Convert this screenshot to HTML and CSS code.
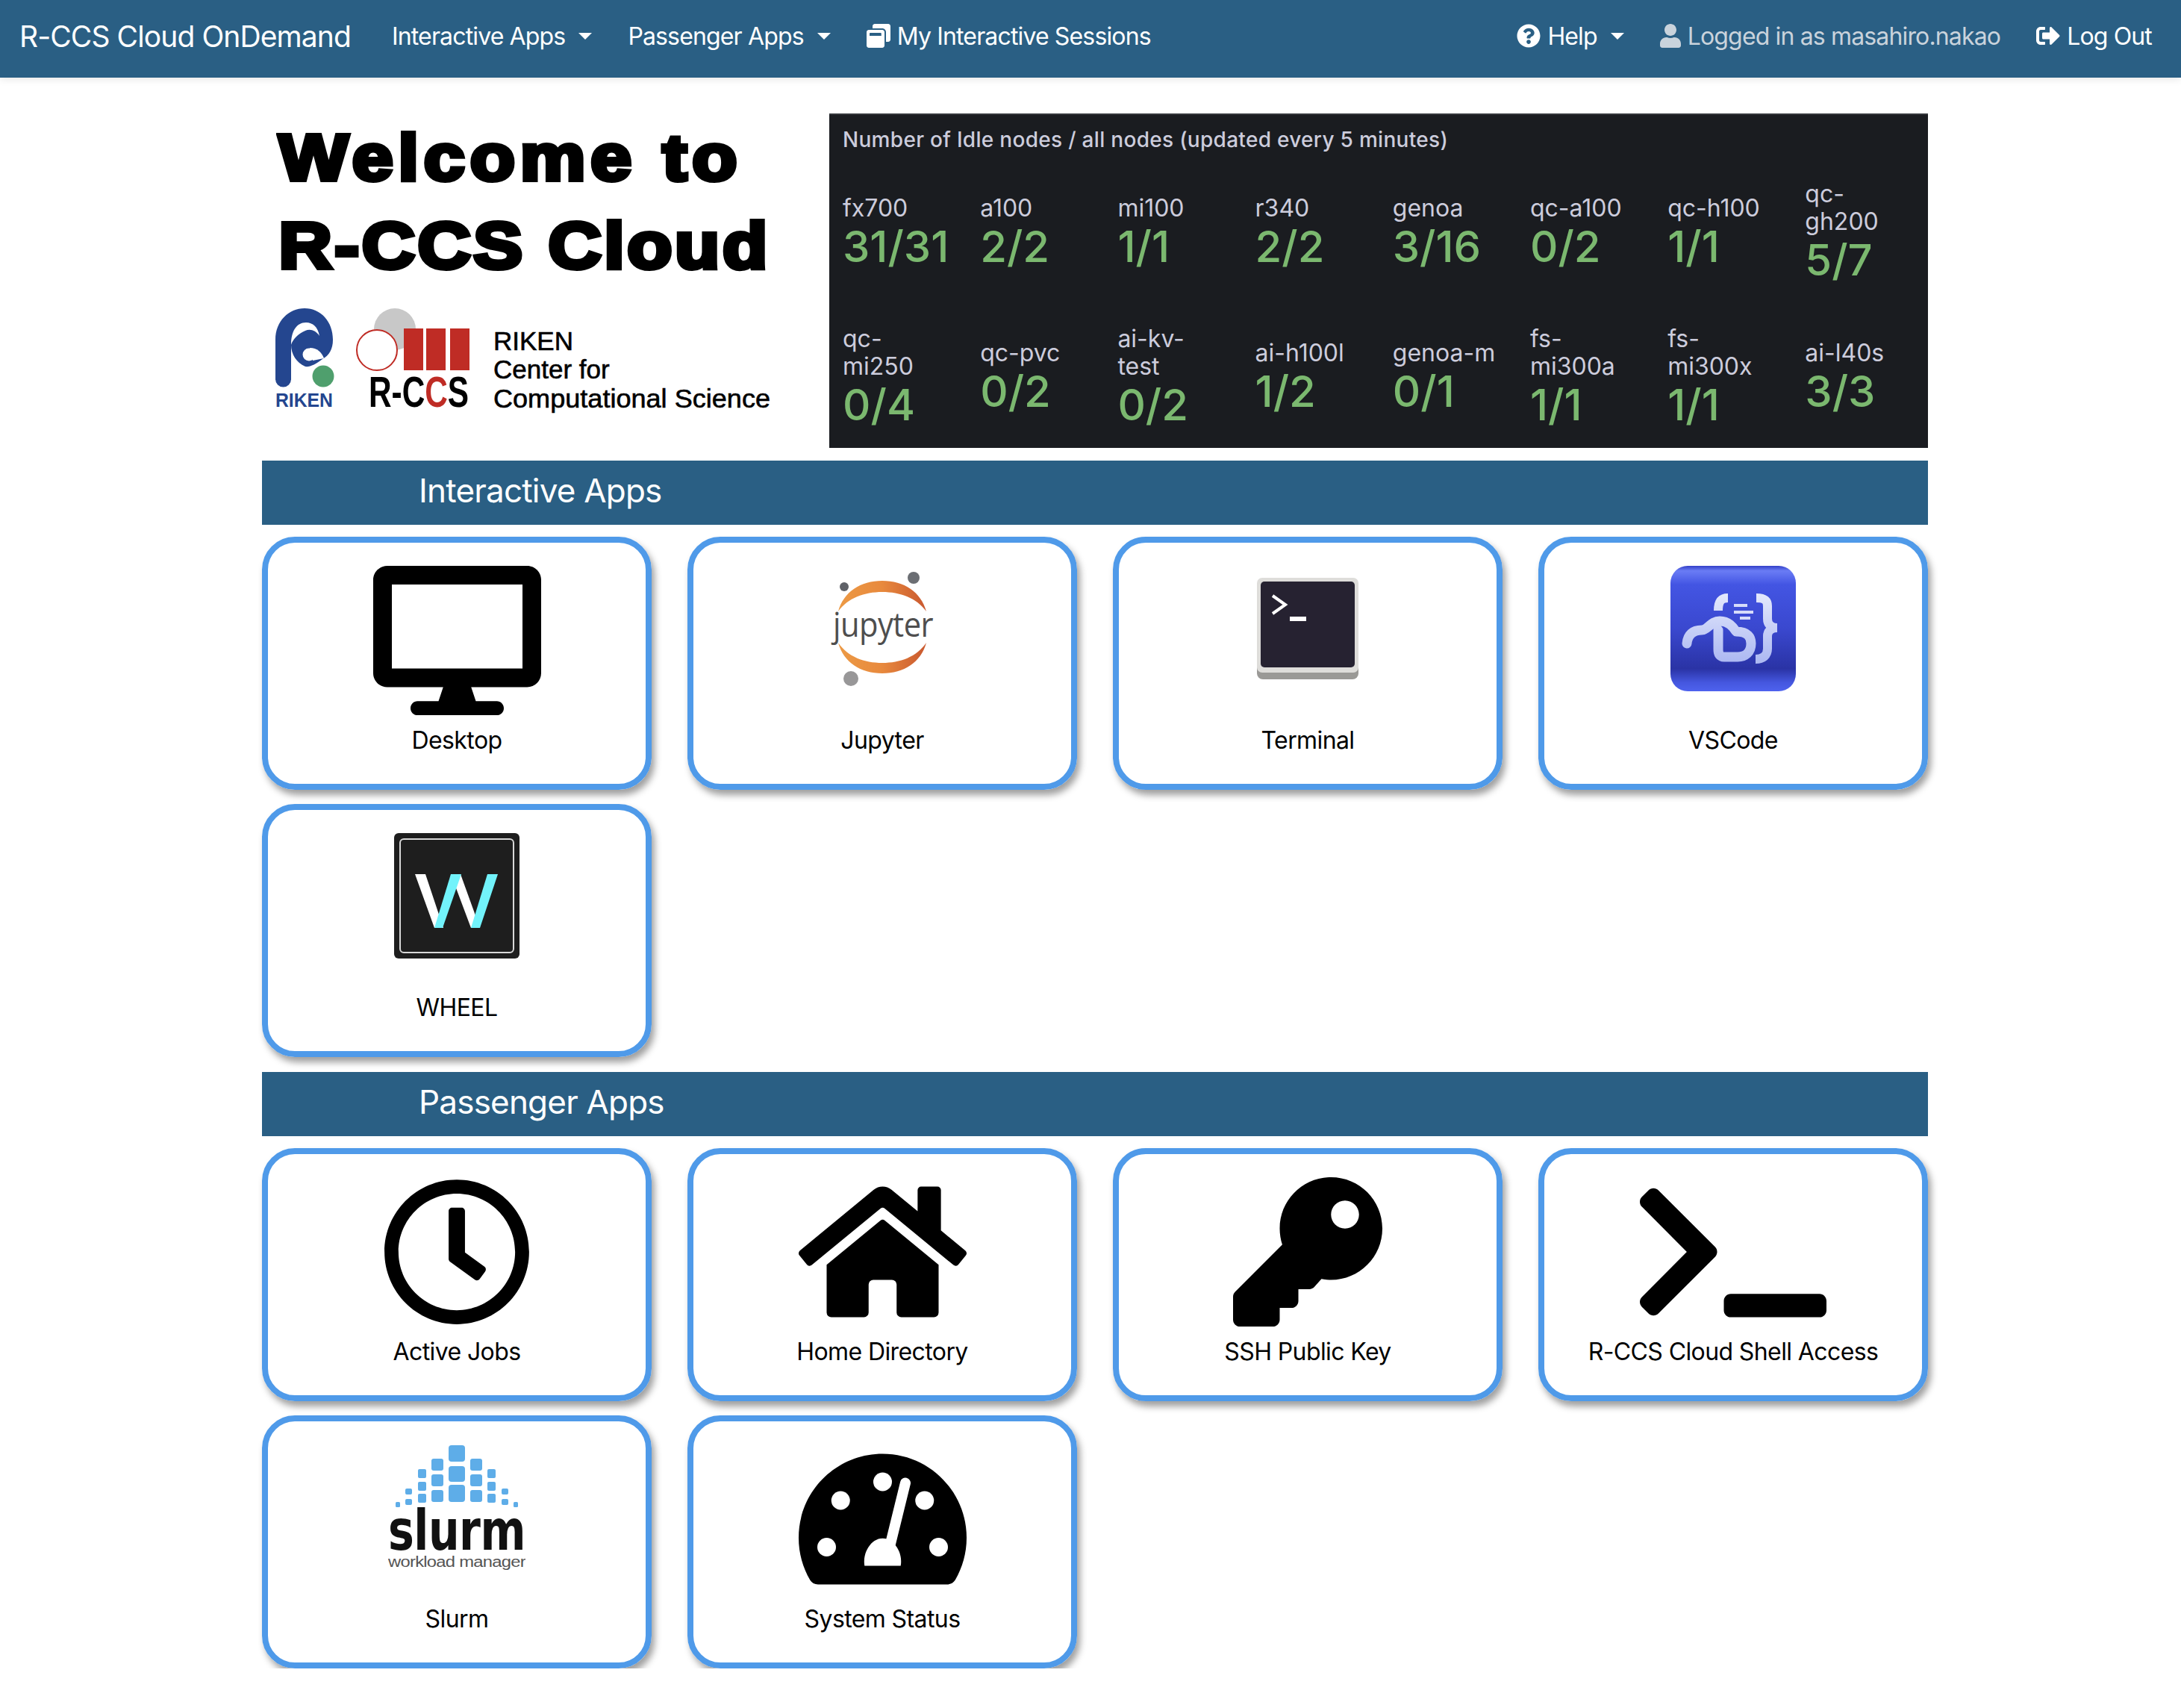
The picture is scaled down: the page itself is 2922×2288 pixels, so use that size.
FILE: index.html
```html
<!DOCTYPE html>
<html lang="en">
<head>
    <meta charset="UTF-8">
    <title>R-CCS Cloud OnDemand</title>
    <link rel="stylesheet" href="styles.css">
</head>
<body>
    <nav class="navbar">
        <a class="brand" href="#">R-CCS Cloud OnDemand</a>
        <a class="nav-item" href="#">Interactive Apps<span class="caret"></span></a>
        <a class="nav-item" href="#">Passenger Apps<span class="caret"></span></a>
        <a class="nav-item" href="#">
            <svg class="nav-icon" viewBox="0 0 512 512"><path d="M512 48v288c0 26.500-21.500 48-48 48h-48V176c0-44.100-35.900-80-80-80H128V48c0-26.500 21.500-48 48-48h288c26.500 0 48 21.500 48 48zM384 176v288c0 26.500-21.500 48-48 48H48c-26.500 0-48-21.500-48-48V176c0-26.500 21.500-48 48-48h288c26.500 0 48 21.500 48 48zm-68 28c0-6.600-5.400-12-12-12H76c-6.600 0-12 5.400-12 12v52h252v-52z"/></svg>
            My Interactive Sessions
        </a>
        <a class="nav-item nav-right" href="#">
            <svg class="nav-icon" viewBox="0 0 512 512"><path d="M504 256c0 136.997-111.043 248-248 248S8 392.997 8 256C8 119.083 119.043 8 256 8s248 111.083 248 248zM262.655 90c-54.497 0-89.255 22.957-116.549 63.758-3.536 5.286-2.353 12.415 2.715 16.258l34.699 26.310c5.205 3.947 12.621 3.008 16.665-2.122 17.864-22.658 30.113-35.797 57.303-35.797 20.429 0 45.698 13.148 45.698 32.958 0 14.976-12.363 22.667-32.534 33.976C247.128 238.528 216 254.941 216 296v4c0 6.627 5.373 12 12 12h56c6.627 0 12-5.373 12-12v-1.333c0-28.462 83.186-29.647 83.186-106.667 0-58.002-60.165-102-116.531-102zM256 338c-25.365 0-46 20.635-46 46 0 25.364 20.635 46 46 46s46-20.636 46-46c0-25.365-20.635-46-46-46z"/></svg>
            Help<span class="caret"></span>
        </a>
        <span class="nav-item nav-muted">
            <svg class="nav-icon" viewBox="0 0 448 512"><path d="M224 256c70.700 0 128-57.300 128-128S294.700 0 224 0 96 57.300 96 128s57.300 128 128 128zm89.600 32h-16.700c-22.200 10.200-46.900 16-72.900 16s-50.600-5.800-72.900-16h-16.700C60.200 288 0 348.200 0 422.400V464c0 26.500 21.500 48 48 48h352c26.500 0 48-21.500 48-48v-41.600c0-74.200-60.200-134.400-134.400-134.400z"/></svg>
            Logged in as masahiro.nakao
        </span>
        <a class="nav-item" href="#">
            <svg class="nav-icon" viewBox="0 0 512 512"><path d="M497 273L329 441c-15 15-41 4.500-41-17v-96H152c-13.300 0-24-10.700-24-24v-96c0-13.300 10.700-24 24-24h136V88c0-21.400 25.900-32 41-17l168 168c9.300 9.400 9.300 24.600 0 34zM192 436v-40c0-6.600-5.400-12-12-12H96c-17.700 0-32-14.300-32-32V160c0-17.700 14.300-32 32-32h84c6.600 0 12-5.400 12-12V76c0-6.600-5.400-12-12-12H96c-53 0-96 43-96 96v192c0 53 43 96 96 96h84c6.600 0 12-5.400 12-12z"/></svg>
            Log Out
        </a>
    </nav>

    <main class="page">
        <section class="intro">
            <div class="welcome">
                <h1 class="welcome-title"><span class="line-one">Welcome to</span><br><span class="line-two">R-CCS Cloud</span></h1>
                <!-- viewBox uses page coordinates, easier to measure against the screenshot -->
                <svg class="riken-logo" viewBox="350 405 700 150">
                    <defs>
                        <!-- hard stops paint the second C of R-CCS red -->
                        <linearGradient id="rccsFill" x1="0" y1="0" x2="1" y2="0">
                            <stop offset="0.56" stop-color="#000"/>
                            <stop offset="0.56" stop-color="#bf2c25"/>
                            <stop offset="0.78" stop-color="#bf2c25"/>
                            <stop offset="0.78" stop-color="#000"/>
                        </linearGradient>
                    </defs>
                    <path d="M370 508V455C370 430 388 413 409 413C431 413 447 431 447 455C447 468 442 476 433 481C424 488 416 492 410 491C398 486 391 474 391 462V508A10.500 10.500 0 0 1 370 508Z" fill="#24468f"/>
                    <path d="M391 462C391 444 398 432 411 432C420 432 427 438 429 450C424 442 416 440 410 443C400 447 393 455 391 462Z" fill="#fff"/>
                    <circle cx="415" cy="475" r="8.500" fill="#fff"/>
                    <path d="M416 466C426 466 432 472 435 480L420 483Z" fill="#fff"/>
                    <circle cx="434" cy="504" r="14.500" fill="#4f9f6d"/>
                    <text class="logo-riken" x="370" y="545" textLength="77" lengthAdjust="spacingAndGlyphs">RIKEN</text>
                    <circle cx="530" cy="441" r="28" fill="#c8c8c8"/>
                    <circle cx="506" cy="469" r="27" fill="#fff" stroke="#bf2c25" stroke-width="2"/>
                    <rect x="542" y="440" width="26" height="56" fill="#bf2c25"/>
                    <rect x="572" y="440" width="26" height="56" fill="#bf2c25"/>
                    <rect x="604" y="440" width="26" height="56" fill="#bf2c25"/>
                    <text class="logo-rccs" fill="url(#rccsFill)" transform="translate(495 545) scale(0.73 1)">R-CCS</text>
                    <text class="logo-name" x="662" y="469">RIKEN</text>
                    <text class="logo-name" x="662" y="507">Center for</text>
                    <text class="logo-name" x="662" y="546" textLength="371" lengthAdjust="spacingAndGlyphs">Computational Science</text>
                </svg>
            </div>

            <div class="nodes-panel">
                <div class="nodes-title">Number of Idle nodes / all nodes (updated every 5 minutes)</div>
                <div class="nodes-grid">
                    <div class="node"><span class="node-name">fx700</span><span class="node-count">31/31</span></div>
                    <div class="node"><span class="node-name">a100</span><span class="node-count">2/2</span></div>
                    <div class="node"><span class="node-name">mi100</span><span class="node-count">1/1</span></div>
                    <div class="node"><span class="node-name">r340</span><span class="node-count">2/2</span></div>
                    <div class="node"><span class="node-name">genoa</span><span class="node-count">3/16</span></div>
                    <div class="node"><span class="node-name">qc-a100</span><span class="node-count">0/2</span></div>
                    <div class="node"><span class="node-name">qc-h100</span><span class="node-count">1/1</span></div>
                    <div class="node"><span class="node-name">qc-<br>gh200</span><span class="node-count">5/7</span></div>
                    <div class="node"><span class="node-name">qc-<br>mi250</span><span class="node-count">0/4</span></div>
                    <div class="node"><span class="node-name">qc-pvc</span><span class="node-count">0/2</span></div>
                    <div class="node"><span class="node-name">ai-kv-<br>test</span><span class="node-count">0/2</span></div>
                    <div class="node"><span class="node-name">ai-h100l</span><span class="node-count">1/2</span></div>
                    <div class="node"><span class="node-name">genoa-m</span><span class="node-count">0/1</span></div>
                    <div class="node"><span class="node-name">fs-<br>mi300a</span><span class="node-count">1/1</span></div>
                    <div class="node"><span class="node-name">fs-<br>mi300x</span><span class="node-count">1/1</span></div>
                    <div class="node"><span class="node-name">ai-l40s</span><span class="node-count">3/3</span></div>
                </div>
            </div>
        </section>

        <h2 class="section-bar">Interactive Apps</h2>
        <div class="app-grid">
            <a class="app-card" href="#">
                <div class="app-icon">
                    <svg class="fa-icon" viewBox="0 0 576 512"><path d="M528 0H48C21.500 0 0 21.500 0 48v320c0 26.500 21.500 48 48 48h192l-16 48h-72c-13.300 0-24 10.700-24 24s10.700 24 24 24h272c13.300 0 24-10.700 24-24s-10.700-24-24-24h-72l-16-48h192c26.500 0 48-21.500 48-48V48c0-26.500-21.500-48-48-48zm-16 352H64V64h448v288z"/></svg>
                </div>
                <span class="app-name">Desktop</span>
            </a>
            <a class="app-card" href="#">
                <div class="app-icon">
                    <svg class="img-icon" viewBox="0 0 168 168">
                        <defs>
                            <linearGradient id="jupyterOrange" x1="0" y1="0" x2="1" y2="0">
                                <stop offset="0" stop-color="#ec9a45"/>
                                <stop offset="0.5" stop-color="#e8893d"/>
                                <stop offset="1" stop-color="#c9582f"/>
                            </linearGradient>
                        </defs>
                        <path d="M25 61C32 35 55 20 84 20C113 20 136 35 143 61C130 43 108 35 84 35C60 35 38 43 25 61Z" fill="url(#jupyterOrange)"/>
                        <path d="M25 103C38 122 60 130 84 130C108 130 130 122 143 103C136 129 113 144 84 144C55 144 32 129 25 103Z" fill="url(#jupyterOrange)"/>
                        <circle cx="126" cy="16" r="8" fill="#6b6e73"/>
                        <circle cx="33" cy="28" r="6" fill="#5f6268"/>
                        <circle cx="42" cy="151" r="10" fill="#989798"/>
                        <text class="logo-jupyter" x="18" y="95" textLength="134" lengthAdjust="spacingAndGlyphs">jupyter</text>
                    </svg>
                </div>
                <span class="app-name">Jupyter</span>
            </a>
            <a class="app-card" href="#">
                <div class="app-icon">
                    <svg class="img-icon" viewBox="0 0 168 168">
                        <g transform="translate(16 16)">
                            <rect x="0" y="100" width="136" height="36" rx="8" fill="#9a9996"/>
                            <rect x="0" y="0" width="136" height="127" rx="7" fill="#deddda"/>
                            <rect x="5" y="5" width="126" height="115" rx="5" fill="#262231"/>
                            <path d="M21 24L38 36L21 48" fill="none" stroke="#fff" stroke-width="4"/>
                            <rect x="44" y="52" width="22" height="6" fill="#fff"/>
                        </g>
                    </svg>
                </div>
                <span class="app-name">Terminal</span>
            </a>
            <a class="app-card" href="#">
                <div class="app-icon">
                    <svg class="img-icon" viewBox="0 0 168 168">
                        <defs>
                            <linearGradient id="vsBlue" x1="0" y1="0" x2="0" y2="1">
                                <stop offset="0" stop-color="#3340c8"/>
                                <stop offset="0.04" stop-color="#6a7cf5"/>
                                <stop offset="0.15" stop-color="#4355e3"/>
                                <stop offset="0.5" stop-color="#3a48cf"/>
                                <stop offset="0.82" stop-color="#2a33a5"/>
                                <stop offset="0.93" stop-color="#4557df"/>
                                <stop offset="1" stop-color="#4e62ee"/>
                            </linearGradient>
                            <linearGradient id="vsMark" gradientUnits="userSpaceOnUse" x1="0" y1="40" x2="0" y2="126">
                                <stop offset="0" stop-color="#e2e7fc"/>
                                <stop offset="1" stop-color="#aebaf2"/>
                            </linearGradient>
                        </defs>
                        <rect width="168" height="168" rx="23" fill="url(#vsBlue)"/>
                        <g fill="none" stroke="url(#vsMark)" stroke-width="12">
                            <path d="M77 43C66 43 64 50 64 60"/>
                            <path d="M115 43C126 43 130 46 130 54V71C130 78 134 83 143 83C134 83 130 88 130 94V111C130 120 124 125 114 125"/>
                        </g>
                        <path d="M22 104C23 92 30 86 42 86C50 86 54 74 66 74C78 74 84 82 88 88C104 88 108 96 108 104C108 116 100 122 90 122H72C66 122 64 118 64 112V86" fill="none" stroke="url(#vsMark)" stroke-width="13" stroke-linecap="round" stroke-linejoin="round"/>
                        <g stroke="#d6dcfa" stroke-width="4">
                            <line x1="85" y1="53" x2="103" y2="53"/>
                            <line x1="85" y1="62" x2="111" y2="62"/>
                            <line x1="93" y1="70" x2="107" y2="70"/>
                        </g>
                    </svg>
                </div>
                <span class="app-name">VSCode</span>
            </a>
            <a class="app-card" href="#">
                <div class="app-icon">
                    <svg class="img-icon" viewBox="0 0 168 168">
                        <rect width="168" height="168" rx="6" fill="#1e1e1e"/>
                        <rect x="8" y="8" width="152" height="152" rx="5" fill="none" stroke="#d8d8d8" stroke-width="2"/>
                        <g fill="#fff">
                            <path d="M28 55H42L66 127H54Z"/>
                            <path d="M76 55H89L115 127H103Z"/>
                        </g>
                        <g fill="#72f3fb">
                            <path d="M76 55H90L65 127H54Z"/>
                            <path d="M125 55H139L115 127H103Z"/>
                        </g>
                    </svg>
                </div>
                <span class="app-name">WHEEL</span>
            </a>
        </div>

        <h2 class="section-bar section-bar-second">Passenger Apps</h2>
        <div class="app-grid">
            <a class="app-card" href="#">
                <div class="app-icon">
                    <svg class="fa-icon" viewBox="0 0 512 512"><path d="M256 8C119 8 8 119 8 256s111 248 248 248 248-111 248-248S393 8 256 8zm0 448c-110.500 0-200-89.500-200-200S145.500 56 256 56s200 89.500 200 200-89.500 200-200 200zm61.800-104.400l-84.900-61.700c-3.100-2.300-4.900-5.900-4.900-9.700V116c0-6.600 5.400-12 12-12h32c6.600 0 12 5.400 12 12v141.700l66.800 48.600c5.400 3.900 6.500 11.400 2.600 16.800L334.600 349c-3.900 5.300-11.400 6.500-16.800 2.600z"/></svg>
                </div>
                <span class="app-name">Active Jobs</span>
            </a>
            <a class="app-card" href="#">
                <div class="app-icon">
                    <svg class="fa-icon" viewBox="0 0 576 512"><path d="M280.370 148.260L96 300.110V464a16 16 0 0 0 16 16l112.060-.29a16 16 0 0 0 15.920-16V368a16 16 0 0 1 16-16h64a16 16 0 0 1 16 16v95.640a16 16 0 0 0 16 16.050L464 480a16 16 0 0 0 16-16V300L295.670 148.260a12.190 12.190 0 0 0-15.300 0zM571.600 251.470L488 182.560V44.050a12 12 0 0 0-12-12h-56a12 12 0 0 0-12 12v72.610L318.470 43a48 48 0 0 0-61 0L4.340 251.470a12 12 0 0 0-1.600 16.900l25.500 31A12 12 0 0 0 45.150 301l235.220-193.740a12.190 12.190 0 0 1 15.300 0L530.900 301a12 12 0 0 0 16.900-1.600l25.500-31a12 12 0 0 0-1.700-16.930z"/></svg>
                </div>
                <span class="app-name">Home Directory</span>
            </a>
            <a class="app-card" href="#">
                <div class="app-icon">
                    <svg class="fa-icon" viewBox="0 0 512 512"><path d="M512 176.001C512 273.203 433.202 352 336 352c-11.220 0-22.190-1.062-32.827-3.069l-24.012 27.014A23.999 23.999 0 0 1 261.223 384H224v40c0 13.255-10.745 24-24 24h-40v40c0 13.255-10.745 24-24 24H24c-13.255 0-24-10.745-24-24v-78.059c0-6.365 2.529-12.470 7.029-16.971l161.802-161.802C163.108 213.814 160 195.271 160 176 160 78.798 238.797.001 335.999 0 433.488-.001 512 78.511 512 176.001zM336 128c0 26.510 21.490 48 48 48s48-21.490 48-48-21.490-48-48-48-48 21.490-48 48z"/></svg>
                </div>
                <span class="app-name">SSH Public Key</span>
            </a>
            <a class="app-card" href="#">
                <div class="app-icon">
                    <svg class="fa-icon" viewBox="0 0 640 512"><path d="M257.981 272.971L63.638 467.314c-9.373 9.373-24.569 9.373-33.941 0L7.029 444.647c-9.357-9.357-9.375-24.522-.04-33.901L161.011 256 6.990 101.255c-9.335-9.379-9.317-24.544.04-33.901l22.667-22.667c9.373-9.373 24.569-9.373 33.941 0L257.981 239.030c9.373 9.372 9.373 24.568 0 33.941zM640 456v-32c0-13.255-10.745-24-24-24H312c-13.255 0-24 10.745-24 24v32c0 13.255 10.745 24 24 24h304c13.255 0 24-10.745 24-24z"/></svg>
                </div>
                <span class="app-name">R-CCS Cloud Shell Access</span>
            </a>
            <a class="app-card" href="#">
                <div class="app-icon">
                    <svg class="slurm-icon" viewBox="0 0 184 168">
                        <g fill="#5eade8" transform="translate(0 1)">
                            <rect x="81" y="0" width="22" height="22" rx="4"/><rect x="81" y="28" width="22" height="21" rx="4"/><rect x="81" y="53" width="22" height="23" rx="4"/>
                            <rect x="58" y="18" width="16" height="16" rx="3"/><rect x="58" y="39" width="16" height="16" rx="3"/><rect x="58" y="60" width="16" height="16" rx="3"/>
                            <rect x="110" y="18" width="16" height="16" rx="3"/><rect x="110" y="39" width="16" height="16" rx="3"/><rect x="110" y="60" width="16" height="16" rx="3"/>
                            <rect x="40" y="32" width="11" height="12" rx="2"/><rect x="40" y="49" width="11" height="12" rx="2"/><rect x="40" y="65" width="11" height="12" rx="2"/>
                            <rect x="133" y="32" width="11" height="12" rx="2"/><rect x="133" y="49" width="11" height="12" rx="2"/><rect x="133" y="65" width="11" height="12" rx="2"/>
                            <rect x="23" y="58" width="9" height="8" rx="2"/><rect x="23" y="72" width="9" height="8" rx="2"/>
                            <rect x="152" y="58" width="9" height="8" rx="2"/><rect x="152" y="72" width="9" height="8" rx="2"/>
                            <rect x="10" y="76" width="6" height="7" rx="1.500"/><rect x="168" y="76" width="6" height="7" rx="1.500"/>
                        </g>
                        <text class="logo-slurm" x="0" y="141" textLength="184" lengthAdjust="spacingAndGlyphs">slurm</text>
                        <text class="logo-slurm-sub" x="0" y="164" textLength="184" lengthAdjust="spacingAndGlyphs">workload manager</text>
                    </svg>
                </div>
                <span class="app-name">Slurm</span>
            </a>
            <a class="app-card" href="#">
                <div class="app-icon">
                    <svg class="fa-icon" viewBox="0 0 576 512">
                        <path d="M288 32C128.940 32 0 160.940 0 320c0 52.800 14.250 102.260 39.060 144.800 5.610 9.620 16.300 15.200 27.440 15.200h443c11.140 0 21.830-5.580 27.440-15.200C561.750 422.260 576 372.800 576 320c0-159.060-128.940-288-288-288z"/>
                        <g fill="#fff">
                            <circle cx="288" cy="128" r="32"/>
                            <circle cx="144" cy="192" r="32"/>
                            <circle cx="432" cy="192" r="32"/>
                            <circle cx="96" cy="352" r="32"/>
                            <circle cx="480" cy="352" r="32"/>
                        </g>
                        <line x1="366" y1="132" x2="338" y2="250" stroke="#000" stroke-width="66"/>
                        <line x1="366" y1="132" x2="310" y2="360" stroke="#fff" stroke-width="36" stroke-linecap="round"/>
                        <path d="M226 416C218 372 248 322 288 322C328 322 358 372 350 416Z" fill="#fff"/>
                    </svg>
                </div>
                <span class="app-name">System Status</span>
            </a>
        </div>
    </main>
</body>
</html>
```

FILE: styles.css
```css
body {
    margin: 0;
    background-color: white;
    color: black;
    font-family: Inter, "Liberation Sans", sans-serif;
    font-size: 32px;
    letter-spacing: -0.6px;
}
a {
    color: inherit;
    text-decoration: none;
}

/* top navigation */
.navbar {
    display: flex;
    align-items: center;
    height: 104px;
    box-sizing: border-box;
    padding: 0 15px 8px 26px;
    background-color: #2a5f84;
    color: white;
    box-shadow: 0 2px 10px rgba(0, 0, 0, 0.1);
}
.brand {
    font-size: 39px;
    letter-spacing: -0.9px;
    margin-right: 31px;
}
.nav-item {
    display: flex;
    align-items: center;
    gap: 9px;
    padding: 0 24px;
    white-space: nowrap;
    letter-spacing: -0.85px;
}
.nav-right {
    margin-left: auto;
}
.nav-muted {
    color: #c9d3dc;
}
.nav-icon {
    height: 32px;
    fill: currentColor;
    flex: none;
}
.caret {
    width: 0;
    height: 0;
    margin-left: 9px;
    border-top: 9px solid currentColor;
    border-left: 9px solid transparent;
    border-right: 9px solid transparent;
}

/* page body */
.page {
    padding: 48px 339px 0 351px;
}
.intro {
    display: flex;
    height: 448px;
}
.welcome {
    width: 760px;
    flex: none;
}
.welcome-title {
    margin: 0 0 2px;
    padding-left: 22px;
    font-family: "Liberation Sans", sans-serif;
    font-size: 88px;
    line-height: 118px;
    font-weight: bold;
    letter-spacing: 0;
    -webkit-text-stroke: 6px black;
    white-space: nowrap;
    transform: scaleX(1.12);
    transform-origin: 17px 0;
}
.line-one {
    letter-spacing: 6.200px;
}
.line-two {
    letter-spacing: 3.200px;
}
.riken-logo {
    display: block;
    width: 700px;
    height: 150px;
    margin: 17px 0 0 -2px;
    letter-spacing: 0;
}
.logo-riken {
    font-size: 26px;
    font-weight: bold;
    fill: #24468f;
    font-family: "Liberation Sans", sans-serif;
}
.logo-rccs {
    font-size: 58px;
    font-weight: bold;
    font-family: "Liberation Sans", sans-serif;
}
.logo-name {
    font-size: 35px;
    font-family: "Liberation Sans", sans-serif;
    stroke: black;
    stroke-width: 0.6px;
}
.logo-jupyter {
    font-size: 46px;
    fill: #4e4e4e;
    font-family: "Open Sans", sans-serif;
}
.logo-slurm {
    font-size: 74px;
    font-weight: bold;
    font-family: "DejaVu Sans", sans-serif;
    fill: #111;
}
.logo-slurm-sub {
    font-size: 20px;
    fill: #555;
    font-family: "Liberation Sans", sans-serif;
}

/* idle nodes panel */
.nodes-panel {
    flex: 1;
    min-width: 0;
    box-sizing: border-box;
    padding: 15px 0 0 18px;
    background-color: #1a1c20;
    border-top: 2px solid #33353a;
    letter-spacing: 0;
}
.nodes-title {
    font-size: 28px;
    font-weight: 500;
    line-height: 37px;
    letter-spacing: 0.3px;
    color: #ccccdc;
    margin-bottom: 8px;
}
.nodes-grid {
    display: grid;
    grid-template-columns: repeat(7, 184.2px) 1fr;
    grid-auto-rows: 194px;
}
.node {
    display: flex;
    flex-direction: column;
    justify-content: center;
}
.node-name {
    font-size: 32px;
    line-height: 37px;
    color: #ccccdc;
    white-space: nowrap;
}
.node-count {
    font-size: 58px;
    line-height: 66px;
    font-weight: 500;
    color: #7bb86f;
}

/* section headers */
.section-bar {
    margin: 17px 0 16px;
    height: 86px;
    box-sizing: border-box;
    padding-left: 210px;
    background-color: #2a5f84;
    color: white;
    font-size: 44px;
    font-weight: normal;
    letter-spacing: -0.8px;
    line-height: 81px;
}
.section-bar-second {
    margin-top: 20px;
}

/* app cards */
.app-grid {
    display: grid;
    grid-template-columns: repeat(4, 1fr);
    gap: 19px 48px;
}
.app-card {
    display: flex;
    flex-direction: column;
    align-items: center;
    height: 339px;
    box-sizing: border-box;
    padding-top: 31px;
    border: 8px solid #4f9ae9;
    border-radius: 44px;
    box-shadow: 4px 7px 10px rgba(0, 0, 0, 0.38);
}
.app-icon {
    height: 200px;
    margin-bottom: 10px;
}
.fa-icon {
    display: block;
    height: 200px;
}
.img-icon {
    display: block;
    width: 168px;
    height: 168px;
}
.slurm-icon {
    display: block;
    width: 184px;
    height: 168px;
}
.app-name {
    line-height: 47px;
}
```
